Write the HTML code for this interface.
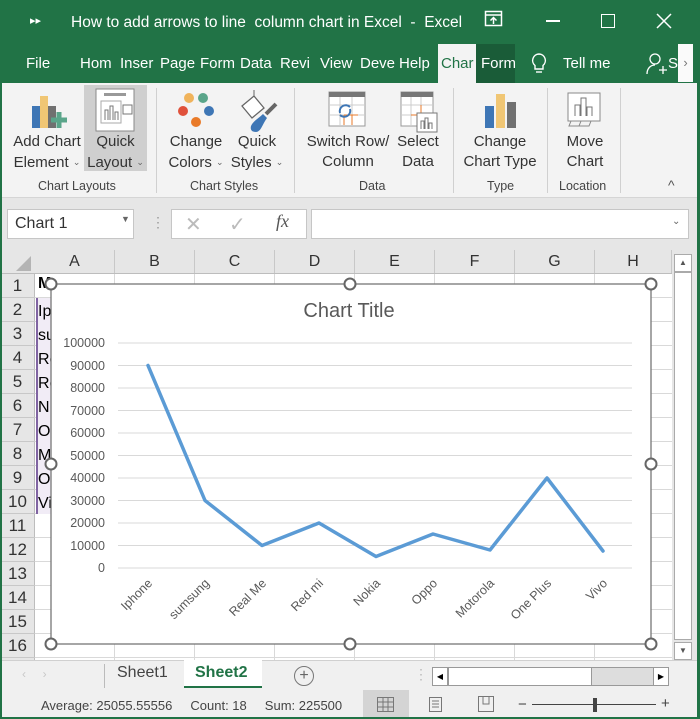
<!DOCTYPE html>
<html><head><meta charset="utf-8"><style>
*{margin:0;padding:0;box-sizing:border-box}
body{width:700px;height:719px;overflow:hidden;background:#e6e6e6;font-family:"Liberation Sans",sans-serif;position:relative}
.a{position:absolute}
.t{color:#fff;font-size:15px;position:absolute;top:55px}
.rl{position:absolute;font-size:15px;color:#333;text-align:center;line-height:20px}
.rl i{font-style:normal;font-size:9px;color:#666;vertical-align:2px}
.gl{position:absolute;top:179px;font-size:12.5px;color:#444}
.sep{position:absolute;top:88px;width:1px;height:105px;background:#d0d0d0}
.ch{position:absolute;top:250px;height:23px;font-size:16px;color:#333;text-align:center;line-height:23px;border-right:1px solid #c8c8c8}
.rh{position:absolute;left:0;width:35px;height:24px;font-size:17px;color:#333;text-align:center;line-height:24px;border-bottom:1px solid #c8c8c8}
</style></head><body>
<div class="a" style="left:0;top:0;width:700px;height:83px;background:#217346"></div>
<div class="a" style="left:30px;top:14px;color:#fff;font-size:11px">▸▸</div>
<div class="a" style="left:71px;top:14px;color:#fff;font-size:15.5px">How to add arrows to line&nbsp; column chart in Excel&nbsp; -&nbsp; Excel</div>
<svg class="a" style="left:484px;top:10px" width="20" height="18"><rect x="1.5" y="1.5" width="16" height="14" fill="none" stroke="#fff" stroke-width="1.5"/><line x1="1.5" y1="5" x2="17.5" y2="5" stroke="#fff" stroke-width="1.5"/><path d="M9.5 14V8M6.5 10.5l3-3 3 3" fill="none" stroke="#fff" stroke-width="1.5"/></svg>
<div class="a" style="left:546px;top:20px;width:14px;height:1.5px;background:#fff"></div>
<div class="a" style="left:601px;top:14px;width:14px;height:14px;border:1.5px solid #fff"></div>
<svg class="a" style="left:656px;top:13px" width="16" height="16"><path d="M1 1L15 15M15 1L1 15" stroke="#fff" stroke-width="1.5"/></svg>
<div class="t" style="left:26px">File</div>
<div class="t" style="left:80px">Hom</div>
<div class="t" style="left:120px">Inser</div>
<div class="t" style="left:160px">Page</div>
<div class="t" style="left:200px">Form</div>
<div class="t" style="left:240px">Data</div>
<div class="t" style="left:280px">Revi</div>
<div class="t" style="left:320px">View</div>
<div class="t" style="left:360px">Deve</div>
<div class="t" style="left:399px">Help</div>
<div class="a" style="left:438px;top:44px;width:38px;height:40px;background:#f3f3f3"></div>
<div class="t" style="left:441px;color:#217346">Char</div>
<div class="a" style="left:476px;top:44px;width:39px;height:39px;background:#1a5c38"></div>
<div class="t" style="left:481px">Form</div>
<svg class="a" style="left:530px;top:52px" width="18" height="24"><path d="M9 2a6.5 6.5 0 0 0-4 11.5V17h8v-3.5A6.5 6.5 0 0 0 9 2z" fill="none" stroke="#fff" stroke-width="1.4"/><path d="M6 20h6" stroke="#fff" stroke-width="1.4"/></svg>
<div class="t" style="left:563px">Tell me</div>
<svg class="a" style="left:646px;top:52px" width="22" height="24"><circle cx="9" cy="7" r="5" fill="none" stroke="#fff" stroke-width="1.3"/><path d="M1 22c0-6 4-9 8-9" fill="none" stroke="#fff" stroke-width="1.3"/><path d="M13 18h8M17 14v8" stroke="#fff" stroke-width="1.3"/></svg>
<div class="t" style="left:668px">SI</div>
<div class="a" style="left:678px;top:44px;width:15px;height:38px;background:#fafafa;color:#777;font-size:13px;line-height:38px;text-align:center">›</div>
<div class="a" style="left:0;top:83px;width:700px;height:115px;background:#f3f3f3;border-bottom:1px solid #d5d5d5"></div>
<div class="a" style="left:84px;top:85px;width:63px;height:86px;background:#cfcfcf"></div>
<svg class="a" style="left:30px;top:92px" width="40" height="40"><rect x="2" y="14" width="8" height="22" fill="#3e76b5"/><rect x="10" y="4" width="8" height="32" fill="#f0c674"/><rect x="18" y="14" width="8" height="22" fill="#707070"/><path d="M29 20v16M21 28h16" stroke="#5aa58a" stroke-width="5"/></svg>
<svg class="a" style="left:95px;top:88px" width="40" height="44"><rect x="1" y="1" width="38" height="42" fill="#fff" stroke="#8a8a8a"/><rect x="9" y="5" width="22" height="3" fill="#999"/><rect x="6" y="13" width="20" height="22" fill="none" stroke="#aaa"/><path d="M10 32v-10h3v10M15 32v-14h3v14M20 32v-8h3v8" fill="none" stroke="#777"/><rect x="28" y="17" width="9" height="9" fill="#fff" stroke="#777"/></svg>
<svg class="a" style="left:176px;top:90px" width="44" height="40"><circle cx="13" cy="8" r="5" fill="#f0b35b"/><circle cx="27" cy="8" r="5" fill="#5aa58a"/><circle cx="7" cy="21" r="5" fill="#e0513b"/><circle cx="33" cy="21" r="5" fill="#3e76b5"/><circle cx="20" cy="32" r="5" fill="#e97a28"/></svg>
<svg class="a" style="left:238px;top:88px" width="40" height="46"><path d="M4 18l12-10 10 12-12 10z" fill="#fff" stroke="#666" stroke-width="1.3"/><path d="M16 8V2" stroke="#666"/><path d="M18 44c-4 0-6-2-5-6 2-5 8-8 12-12l4 4c-4 5-6 14-11 14z" fill="#3e76b5"/><path d="M28 26l10-10" stroke="#666" stroke-width="4"/></svg>
<svg class="a" style="left:328px;top:91px" width="38" height="36"><rect x="1" y="1" width="36" height="34" fill="#fff" stroke="#999"/><rect x="1" y="1" width="36" height="5" fill="#777"/><path d="M1 14h36M1 24h36M12 6v29M24 6v29" stroke="#ccc"/><path d="M16 24h14M16 24v10M24 24v10" stroke="#e97a28"/><path d="M12 22a6 6 0 0 1 10-6M22 18a6 6 0 0 1-10 6" fill="none" stroke="#3e76b5" stroke-width="2"/></svg>
<svg class="a" style="left:400px;top:91px" width="38" height="42"><rect x="1" y="1" width="32" height="34" fill="#fff" stroke="#999"/><rect x="1" y="1" width="32" height="5" fill="#777"/><path d="M1 14h32M1 24h32M11 6v29M21 6v29" stroke="#ccc"/><path d="M11 24h14M21 14v12" stroke="#e97a28"/><rect x="17" y="22" width="20" height="19" fill="#fff" stroke="#777"/><path d="M21 38v-8h3v8M25 38v-11h3v11M29 38v-6h3v6" fill="none" stroke="#777"/></svg>
<svg class="a" style="left:484px;top:92px" width="36" height="36"><rect x="1" y="14" width="9" height="22" fill="#3e76b5"/><rect x="12" y="2" width="9" height="34" fill="#f0c674"/><rect x="23" y="10" width="9" height="26" fill="#707070"/></svg>
<svg class="a" style="left:567px;top:92px" width="36" height="36"><rect x="1" y="1" width="32" height="28" fill="#fff" stroke="#888"/><path d="M8 24V13h5v11M14 24V6h5v18M20 24V15h5v9" fill="none" stroke="#777"/><path d="M4 29l-2 5h10l2-5M14 29l-2 5h10l2-5" fill="none" stroke="#888"/></svg>
<div class="rl" style="left:8px;top:132px;width:78px">Add Chart<br>Element <i>⌄</i></div>
<div class="rl" style="left:84px;top:132px;width:63px">Quick<br>Layout <i>⌄</i></div>
<div class="rl" style="left:164px;top:132px;width:64px">Change<br>Colors <i>⌄</i></div>
<div class="rl" style="left:226px;top:132px;width:62px">Quick<br>Styles <i>⌄</i></div>
<div class="rl" style="left:303px;top:132px;width:90px">Switch Row/<br>Column</div>
<div class="rl" style="left:393px;top:132px;width:50px">Select<br>Data</div>
<div class="rl" style="left:458px;top:132px;width:84px">Change<br>Chart Type</div>
<div class="rl" style="left:555px;top:132px;width:60px">Move<br>Chart</div>
<div class="gl" style="left:38px">Chart Layouts</div>
<div class="gl" style="left:190px">Chart Styles</div>
<div class="gl" style="left:359px">Data</div>
<div class="gl" style="left:487px">Type</div>
<div class="gl" style="left:559px">Location</div>
<div class="sep" style="left:156px"></div><div class="sep" style="left:294px"></div><div class="sep" style="left:453px"></div><div class="sep" style="left:547px"></div><div class="sep" style="left:620px"></div>
<div class="a" style="left:668px;top:177px;color:#555;font-size:14px">^</div>
<div class="a" style="left:7px;top:209px;width:127px;height:30px;background:#fff;border:1px solid #c6c6c6;font-size:16px;color:#333;padding:5px 0 0 7px">Chart 1<span style="position:absolute;left:113px;top:4px;font-size:9px;color:#666">▼</span></div>
<div class="a" style="left:151px;top:214px;color:#999;font-size:14px">⋮</div>
<div class="a" style="left:171px;top:209px;width:136px;height:30px;background:#fff;border:1px solid #c6c6c6"></div>
<div class="a" style="left:185px;top:212px;color:#bbb;font-size:20px">✕</div>
<div class="a" style="left:229px;top:212px;color:#bbb;font-size:20px">✓</div>
<div class="a" style="left:276px;top:211px;color:#555;font-size:18px;font-style:italic;font-family:'Liberation Serif',serif">fx</div>
<div class="a" style="left:311px;top:209px;width:378px;height:30px;background:#fff;border:1px solid #c6c6c6"></div>
<div class="a" style="left:672px;top:216px;color:#666;font-size:10px">⌄</div>
<div class="a" style="left:35px;top:274px;width:637px;height:386px;background:#fff;background-image:linear-gradient(#d9d9d9 1px,transparent 1px),linear-gradient(90deg,#d9d9d9 1px,transparent 1px);background-size:80px 24px,80px 24px;background-position:0 -1px,-1px 0"></div>
<div class="a" style="left:0;top:250px;width:672px;height:24px;background:#e6e6e6;border-bottom:1px solid #bdbdbd"></div>
<svg class="a" style="left:14px;top:256px" width="18" height="16"><path d="M17 0V15H2z" fill="#b4b4b4"/></svg>
<div class="ch" style="left:35px;width:80px">A</div><div class="ch" style="left:115px;width:80px">B</div><div class="ch" style="left:195px;width:80px">C</div><div class="ch" style="left:275px;width:80px">D</div><div class="ch" style="left:355px;width:80px">E</div><div class="ch" style="left:435px;width:80px">F</div><div class="ch" style="left:515px;width:80px">G</div><div class="ch" style="left:595px;width:77px">H</div>
<div class="a" style="left:0;top:274px;width:35px;height:386px;background:#e6e6e6;border-right:1px solid #bdbdbd"></div>
<div class="rh" style="top:274px">1</div><div class="rh" style="top:298px">2</div><div class="rh" style="top:322px">3</div><div class="rh" style="top:346px">4</div><div class="rh" style="top:370px">5</div><div class="rh" style="top:394px">6</div><div class="rh" style="top:418px">7</div><div class="rh" style="top:442px">8</div><div class="rh" style="top:466px">9</div><div class="rh" style="top:490px">10</div><div class="rh" style="top:514px">11</div><div class="rh" style="top:538px">12</div><div class="rh" style="top:562px">13</div><div class="rh" style="top:586px">14</div><div class="rh" style="top:610px">15</div><div class="rh" style="top:634px">16</div>
<div class="a" style="left:36px;top:298px;width:15px;height:216px;background:#f1ecf6;border-left:2px solid #8064a2"></div>
<div class="a" style="left:38px;top:275px;font-size:16px;font-weight:bold;color:#000">M</div>
<div class="a" style="left:38px;top:300px;font-size:16px;line-height:24px;color:#000;width:13px;overflow:hidden;white-space:nowrap">Ip<br>su<br>Re<br>Re<br>N<br>O<br>M<br>O<br>Vi</div>
<svg class="a" style="left:0;top:0" width="700" height="719">
<rect x="51" y="284" width="600" height="360" fill="#fff" stroke="#777" stroke-width="1.3"/>
<text x="349" y="317" font-size="20" fill="#595959" text-anchor="middle" font-family="Liberation Sans">Chart Title</text>
<g stroke="#d9d9d9" stroke-width="1">
<line x1="118" y1="343" x2="632" y2="343"/><line x1="118" y1="365.5" x2="632" y2="365.5"/><line x1="118" y1="388" x2="632" y2="388"/><line x1="118" y1="410.5" x2="632" y2="410.5"/><line x1="118" y1="433" x2="632" y2="433"/><line x1="118" y1="455.5" x2="632" y2="455.5"/><line x1="118" y1="478" x2="632" y2="478"/><line x1="118" y1="500.5" x2="632" y2="500.5"/><line x1="118" y1="523" x2="632" y2="523"/><line x1="118" y1="545.5" x2="632" y2="545.5"/><line x1="118" y1="568" x2="632" y2="568"/></g>
<g font-size="12.5" fill="#595959" text-anchor="end" font-family="Liberation Sans">
<text x="105" y="347">100000</text><text x="105" y="370">90000</text><text x="105" y="392">80000</text><text x="105" y="415">70000</text><text x="105" y="437">60000</text><text x="105" y="460">50000</text><text x="105" y="482">40000</text><text x="105" y="505">30000</text><text x="105" y="527">20000</text><text x="105" y="550">10000</text><text x="105" y="572">0</text></g>
<polyline points="148,365.5 205,500.5 262,545.5 319,523 376,556.5 433,534 490,550 547,478 603,551" fill="none" stroke="#5b9bd5" stroke-width="3.5" stroke-linejoin="round" stroke-linecap="round"/>
<g font-size="12.5" fill="#595959" text-anchor="end" font-family="Liberation Sans">
<text transform="translate(153,584) rotate(-45)">Iphone</text><text transform="translate(210,584) rotate(-45)">sumsung</text><text transform="translate(267,584) rotate(-45)">Real Me</text><text transform="translate(324,584) rotate(-45)">Red mi</text><text transform="translate(381,584) rotate(-45)">Nokia</text><text transform="translate(438,584) rotate(-45)">Oppo</text><text transform="translate(495,584) rotate(-45)">Motorola</text><text transform="translate(552,584) rotate(-45)">One Plus</text><text transform="translate(608,584) rotate(-45)">Vivo</text></g>
<g fill="#fff" stroke="#666" stroke-width="2"><circle cx="51" cy="284" r="5.5"/><circle cx="350" cy="284" r="5.5"/><circle cx="651" cy="284" r="5.5"/><circle cx="51" cy="464" r="5.5"/><circle cx="651" cy="464" r="5.5"/><circle cx="51" cy="644" r="5.5"/><circle cx="350" cy="644" r="5.5"/><circle cx="651" cy="644" r="5.5"/></g>
</svg>
<div class="a" style="left:672px;top:250px;width:21px;height:410px;background:#e6e6e6"></div>
<div class="a" style="left:674px;top:254px;width:18px;height:18px;background:#fff;border:1px solid #aaa;font-size:8px;color:#555;text-align:center;line-height:16px">▲</div>
<div class="a" style="left:674px;top:272px;width:18px;height:368px;background:#fff;border:1px solid #aaa"></div>
<div class="a" style="left:674px;top:642px;width:18px;height:18px;background:#fff;border:1px solid #aaa;font-size:8px;color:#555;text-align:center;line-height:16px">▼</div>
<div class="a" style="left:0;top:660px;width:700px;height:30px;background:#f0f0f0;border-top:1px solid #d0d0d0"></div>
<div class="a" style="left:22px;top:667px;color:#c8c8c8;font-size:12px">‹&nbsp;&nbsp;&nbsp;&nbsp;&nbsp;›</div>
<div class="a" style="left:104px;top:664px;width:1px;height:24px;background:#bbb"></div>
<div class="a" style="left:117px;top:664px;font-size:16px;color:#444">Sheet1</div>
<div class="a" style="left:184px;top:660px;width:78px;height:28px;background:#fff;border-bottom:2px solid #217346"></div>
<div class="a" style="left:195px;top:664px;font-size:16px;color:#217346;font-weight:bold">Sheet2</div>
<div class="a" style="left:294px;top:666px;width:20px;height:20px;border:1.3px solid #777;border-radius:50%;color:#666;font-size:16px;text-align:center;line-height:17px">+</div>
<div class="a" style="left:414px;top:666px;color:#bbb;font-size:14px">⋮</div>
<div class="a" style="left:432px;top:667px;width:237px;height:19px;background:#ddd;border:1px solid #999"></div>
<div class="a" style="left:432px;top:667px;width:16px;height:19px;background:#fff;border:1px solid #999;font-size:8px;text-align:center;line-height:17px">◀</div>
<div class="a" style="left:448px;top:667px;width:144px;height:19px;background:#fff;border:1px solid #999"></div>
<div class="a" style="left:653px;top:667px;width:16px;height:19px;background:#fff;border:1px solid #999;font-size:8px;text-align:center;line-height:17px">▶</div>
<div class="a" style="left:0;top:690px;width:700px;height:29px;background:#f0f0f0"></div>
<div class="a" style="left:41px;top:698px;font-size:13px;color:#444">Average: 25055.55556&nbsp;&nbsp;&nbsp;&nbsp;&nbsp;Count: 18&nbsp;&nbsp;&nbsp;&nbsp;&nbsp;Sum: 225500</div>
<div class="a" style="left:363px;top:690px;width:46px;height:29px;background:#d4d4d4"></div>
<svg class="a" style="left:377px;top:697px" width="18" height="16"><rect x="0.5" y="0.5" width="16" height="14" fill="none" stroke="#777"/><path d="M6 1v14M11 1v14M1 5h16M1 10h16" stroke="#777"/></svg>
<svg class="a" style="left:427px;top:697px" width="18" height="16"><rect x="2.5" y="0.5" width="12" height="14" fill="none" stroke="#777"/><path d="M5 4h7M5 7h7M5 10h7" stroke="#777"/></svg>
<svg class="a" style="left:478px;top:696px" width="18" height="18"><rect x="0.5" y="0.5" width="15" height="15" fill="none" stroke="#777"/><path d="M5 1v7h6V1" fill="none" stroke="#777"/></svg>
<div class="a" style="left:518px;top:696px;font-size:15px;color:#444">−</div>
<div class="a" style="left:532px;top:704px;width:124px;height:1px;background:#444"></div>
<div class="a" style="left:593px;top:698px;width:4px;height:14px;background:#444"></div>
<div class="a" style="left:661px;top:695px;font-size:15px;color:#444">+</div>
<div class="a" style="left:0;top:0;width:2px;height:719px;background:#217346"></div>
<div class="a" style="left:697px;top:0;width:3px;height:719px;background:#217346"></div>
<div class="a" style="left:0;top:717px;width:700px;height:2px;background:#217346"></div>
</body></html>
